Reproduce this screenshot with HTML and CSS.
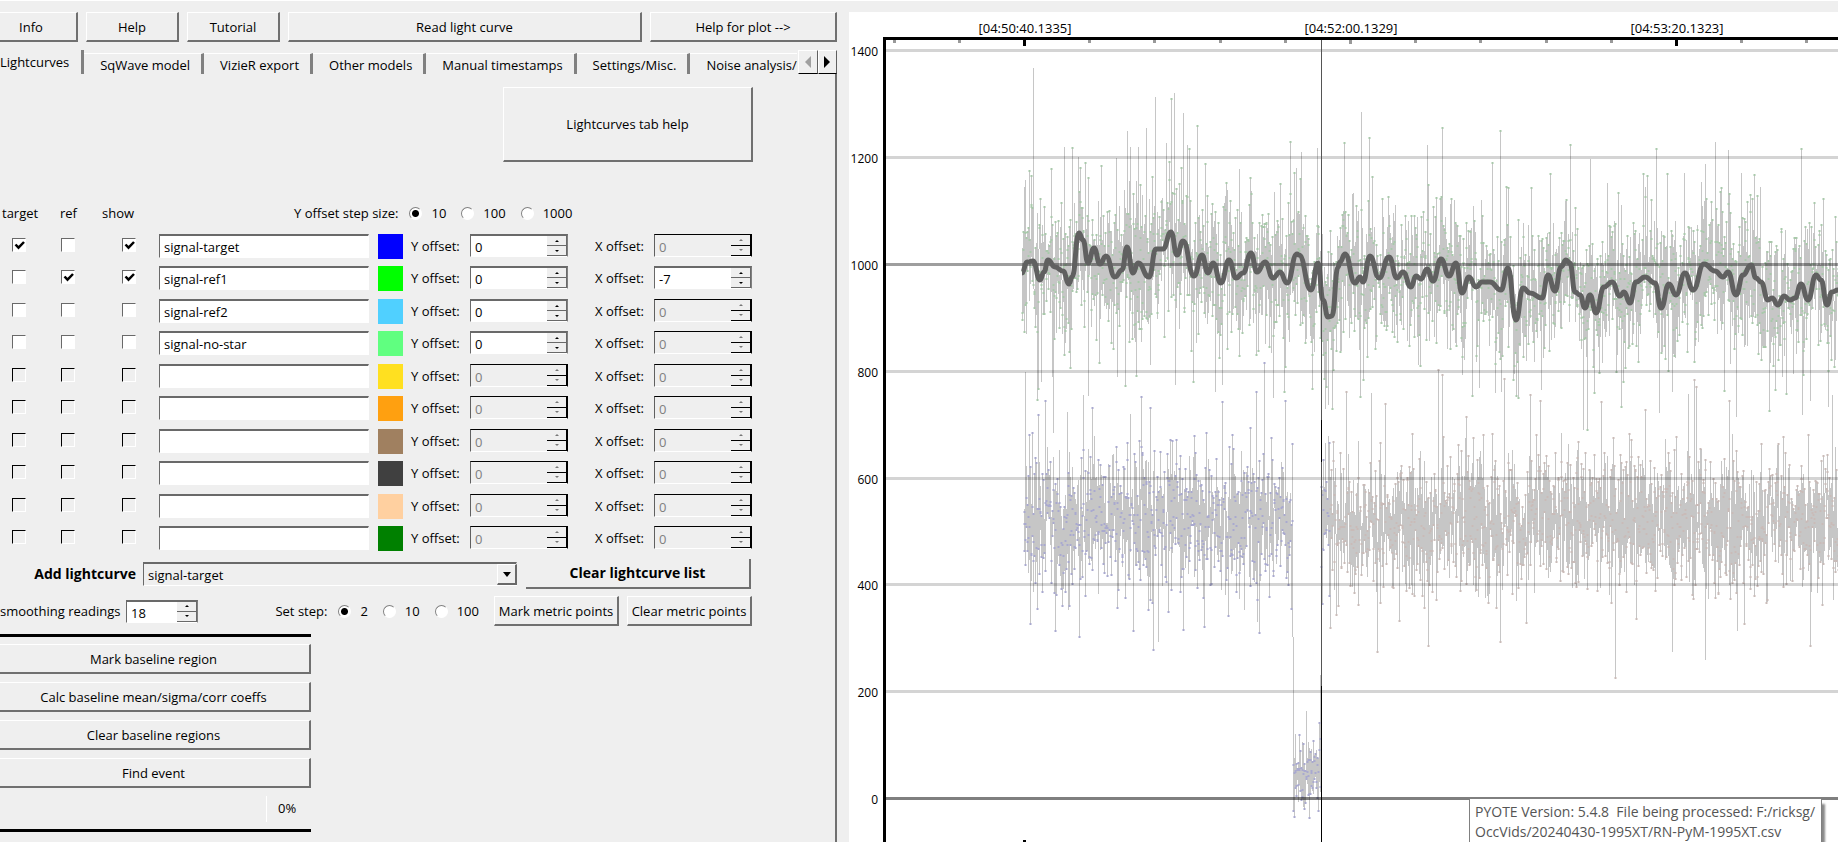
FILE: index.html
```html
<!DOCTYPE html>
<html lang="en">
<head>
  <meta charset="UTF-8" />
  <title>PYOTE</title>
  <meta name="viewport" content="width=device-width, initial-scale=1.0" />
  <link rel="stylesheet" href="styles.css">
</head>
<body>
  <main class="panel">
    <div class="toolbar">
      <button type="button">Info</button>
      <button type="button">Help</button>
      <button type="button">Tutorial</button>
      <button type="button">Read light curve</button>
      <button type="button">Help for plot --&gt;</button>
    </div>

    <div class="tabs">
      <div class="tab-strip" role="tablist">
        <button type="button" role="tab" aria-selected="true" class="tab active">Lightcurves</button>
        <button type="button" role="tab" class="tab">SqWave model</button>
        <button type="button" role="tab" class="tab">VizieR export</button>
        <button type="button" role="tab" class="tab">Other models</button>
        <button type="button" role="tab" class="tab">Manual timestamps</button>
        <button type="button" role="tab" class="tab">Settings/Misc.</button>
        <button type="button" role="tab" class="tab">Noise analysis/</button>
      </div>
      <div class="tab-scroll">
        <button type="button" aria-label="Scroll tabs left" disabled><svg width="6" height="12"><path d="M6 0v12L0 6z" fill="#a0a0a0" /></svg></button>
        <button type="button" aria-label="Scroll tabs right"><svg width="6" height="12"><path d="M0 0v12l6-6z" /></svg></button>
      </div>
    </div>

    <div class="pane">
      <button type="button" class="tab-help">Lightcurves tab help</button>

      <div class="list-header">
        <span>target</span>
        <span>ref</span>
        <span>show</span>
        <div class="radios">
          <span class="radios-title">Y offset step size:</span>
          <label><input type="radio" name="yStep" checked />10</label>
          <label><input type="radio" name="yStep" />100</label>
          <label><input type="radio" name="yStep" />1000</label>
        </div>
      </div>

      <div class="curve-list"></div>

      <div class="add-row">
        <label for="addCurve">Add lightcurve</label>
        <div class="combo">
          <select id="addCurve">
            <option>signal-target</option>
            <option>signal-ref1</option>
            <option>signal-ref2</option>
            <option>signal-no-star</option>
          </select>
          <span class="combo-arrow"><svg width="8" height="5"><path d="M0 0h8L4 5z" /></svg></span>
        </div>
        <button type="button">Clear lightcurve list</button>
      </div>

      <div class="metric-row">
        <label for="smoothing">smoothing readings</label>
        <div class="spin spin-small">
          <input type="number" id="smoothing" value="18" />
          <div class="spin-buttons">
            <button type="button" aria-label="Increase"></button>
            <button type="button" aria-label="Decrease"></button>
          </div>
        </div>
        <div class="radios">
          <span class="radios-title">Set step:</span>
          <label><input type="radio" name="setStep" checked />2</label>
          <label><input type="radio" name="setStep" />10</label>
          <label><input type="radio" name="setStep" />100</label>
        </div>
        <button type="button" class="metric-btn">Mark metric points</button>
        <button type="button" class="metric-btn">Clear metric points</button>
      </div>

      <div class="baseline-box">
        <button type="button">Mark baseline region</button>
        <button type="button">Calc baseline mean/sigma/corr coeffs</button>
        <button type="button">Clear baseline regions</button>
        <button type="button">Find event</button>
        <div class="progress" role="progressbar" aria-valuenow="0"><span>0%</span></div>
      </div>
    </div>
  </main>

  <section class="plot">
    <svg class="plot-svg" viewBox="849 12 989 830" preserveAspectRatio="xMinYMin slice">
      <path id="targetLine" class="curve" />
      <path id="refLine" class="curve" />
      <path id="targetDots" class="dots dots-blue" />
      <path id="fitDots" class="dots dots-tan" />
      <path id="refDots" class="dots dots-green" />
      <g id="grid"></g>
      <path id="smoothLine" class="smooth" />
      <path class="cursor" d="M1321 40h1v802h-1z" />
      <path class="marks" d="M1321 420h1v42h-1zM1321 686h1v156h-1zM1023 840h3v2h-3z" />
      <g id="ticks"></g>
      <path class="axis" d="M883 37h955v3H886v802h-3z" />
      <g id="labels"></g>
    </svg>
    <div class="file-note">PYOTE Version: 5.4.8  File being processed: F:/ricksg/
OccVids/20240430-1995XT/RN-PyM-1995XT.csv</div>
  </section>

  <script src="script.js"></script>
</body>
</html>
```
FILE: styles.css
```css
* {
  box-sizing: border-box;
}
body {
  margin: 0;
  height: 100vh;
  overflow: hidden;
  display: grid;
  grid-template-columns: 849fr 989fr;
  background: #efefef;
  border-top: 1px solid #fff;
  font-family: "Open Sans", "Noto Sans", sans-serif;
  font-size: 13px;
  line-height: 18px;
  color: #000;
}
button, input, select {
  font: inherit;
  color: inherit;
  margin: 0;
  padding: 0;
}
button {
  background: #efefef;
  border: 1px solid #fff;
  border-right: 2px solid #707070;
  border-bottom: 2px solid #707070;
  border-radius: 0;
  white-space: nowrap;
}

/* left side */
.panel {
  min-width: 0;
  overflow: hidden;
  padding: 11px 12px 0 0;
  display: flex;
  flex-direction: column;
}
.toolbar {
  display: grid;
  grid-template-columns: 93px 93px 93px 354fr 187fr;
  gap: 8px;
  margin-left: -15px;
}
.toolbar button {
  height: 30px;
}
.tabs {
  display: flex;
  height: 24px;
  margin-top: 8px;
}
.tab-strip {
  flex: 1;
  min-width: 0;
  overflow: hidden;
  display: flex;
  align-items: flex-end;
}
.tab {
  flex: none;
  height: 21px;
  padding: 2px 11px 0 16px;
  border: none;
  border-top: 1px solid #fff;
  border-right: 3px solid #808080;
}
.tab.active {
  height: 24px;
  padding: 0 12px 0 0;
  border-top: none;
}
.tab:last-child {
  padding-right: 0;
  border-right: none;
}
.tab-scroll {
  display: flex;
  width: 39px;
}
.tab-scroll button {
  flex: 1;
  display: flex;
  align-items: center;
  justify-content: center;
  border: 1px solid #fff;
  border-right: 1px solid #606060;
  border-bottom: 1px solid #000;
}
.pane {
  flex: 1;
  padding: 13px 82px 0 0;
  border-right: 2px solid #707070;
}
.tab-help {
  display: block;
  width: 250px;
  height: 75px;
  margin-left: auto;
}

/* lightcurve list */
.list-header {
  display: grid;
  grid-template-columns: 58px 42px 192px 1fr;
  align-items: center;
  height: 26px;
  margin-top: 38px;
  padding-left: 2px;
}
.radios {
  display: flex;
  align-items: center;
}
.radios-title {
  margin-right: 11px;
}
.radios label {
  display: flex;
  align-items: center;
  gap: 9px;
  margin-right: 15px;
}
input[type="radio"] {
  appearance: none;
  width: 13px;
  height: 13px;
  border: 1px solid;
  border-color: #808080 #fff #fff #808080;
  border-radius: 50%;
  background: #fff;
}
input[type="radio"]:checked {
  background: radial-gradient(circle, #000 3px, #fff 4px);
}
.curve-list {
  margin-top: 8px;
}
.curve-row {
  display: grid;
  grid-template-columns: 49px 61px 37px 1fr 33px 59px 125px 59px 99px;
  height: 32px;
  padding-left: 12px;
}
.curve-row:nth-child(even) {
  height: 33px;
}
.curve-row label {
  line-height: 24px;
}
input[type="checkbox"] {
  appearance: none;
  width: 14px;
  height: 14px;
  margin-top: 4px;
  border: 1px solid;
  border-color: #696969 #fff #fff #696969;
  background: #fff;
}
input[type="checkbox"]:disabled {
  background: #efefef;
  border-color: #000 #fff #fff #000;
}
input[type="checkbox"]:checked {
  background: #fff url("data:image/svg+xml,%3Csvg xmlns='http://www.w3.org/2000/svg' width='12' height='12'%3E%3Cpath d='M2.5 5.5l3 3.2L11 3' fill='none' stroke='%23000' stroke-width='2.5'/%3E%3C/svg%3E");
}
.curve-name {
  height: 24px;
  min-width: 0;
  margin-right: 9px;
  padding: 1px 4px 0;
  border: 1px solid;
  border-width: 2px 1px 1px 1px;
  border-color: #696969 #fff #fff #696969;
  background: #fff;
}
.swatch {
  width: 25px;
  height: 25px;
}
.spin {
  display: flex;
  width: 98px;
  height: 23px;
  border: 1px solid;
  border-color: #696969 #808080 #fff #696969;
  border-top-width: 2px;
  background: #fff;
}
.spin-small {
  width: 72px;
}
.spin input {
  flex: 1;
  min-width: 0;
  padding: 2px 0 0 4px;
  border: none;
  background: none;
  appearance: textfield;
}
.spin input::-webkit-inner-spin-button {
  appearance: none;
}
.spin-buttons {
  display: flex;
  flex-direction: column;
  width: 20px;
}
.spin-buttons button {
  flex: 1;
  min-height: 0;
  display: flex;
  align-items: center;
  justify-content: center;
  border: none;
  border-right: 1px solid #696969;
  border-bottom: 1px solid #696969;
}
.spin-buttons button::before {
  content: "";
  border: 2px solid transparent;
  border-top-width: 0;
  border-bottom-color: #000;
}
.spin-buttons button:last-child::before {
  border-top: 2px solid #000;
  border-bottom: none;
}
.spin.disabled {
  background: #efefef;
  border-width: 1px;
  border-color: #000 #000 #fff #606060;
  color: #808080;
}
.spin.disabled input {
  padding-top: 3px;
}
.spin.disabled button {
  border-color: #000;
}
.spin.disabled button::before {
  opacity: 0.5;
}

/* lower controls */
.add-row {
  display: grid;
  grid-template-columns: 101px 1fr 225px;
  align-items: center;
  height: 30px;
  padding: 0 2px 0 35px;
  font-size: 14px;
  font-weight: bold;
}
.add-row button {
  height: 30px;
  border-left: none;
  border-top: none;
}
.add-row label {
  display: flex;
  justify-content: flex-end;
  white-space: nowrap;
}
.combo {
  position: relative;
  margin: 0 9px 0 7px;
  font-size: 13px;
  font-weight: normal;
}
.combo select {
  display: block;
  width: 100%;
  height: 24px;
  padding-left: 4px;
  appearance: none;
  border: 1px solid;
  border-top-width: 2px;
  border-color: #696969 #fff #fff #696969;
  border-radius: 0;
  background: #efefef;
}
.combo-arrow {
  position: absolute;
  top: 2px;
  right: 0;
  bottom: 1px;
  width: 20px;
  display: flex;
  align-items: center;
  justify-content: center;
  border: 1px solid #fff;
  border-right: 2px solid #696969;
  border-bottom: 2px solid #696969;
  pointer-events: none;
}
.metric-row {
  display: flex;
  align-items: center;
  height: 30px;
  margin-top: 7px;
  padding-right: 1px;
}
.metric-row > label {
  width: 126px;
  white-space: nowrap;
}
.metric-row .radios {
  margin-left: auto;
}
.metric-btn {
  width: 125px;
  height: 30px;
}
.metric-btn + .metric-btn {
  margin-left: 8px;
}
.baseline-box {
  display: flex;
  flex-direction: column;
  gap: 8px;
  width: 314px;
  margin: 8px 0 0 -3px;
  padding-top: 7px;
  border: solid #000;
  border-width: 3px 0;
}
.baseline-box button {
  height: 30px;
}
.progress {
  display: flex;
  justify-content: flex-end;
  height: 33px;
  padding-bottom: 7px;
}
.progress span {
  width: 45px;
  padding: 3px 0 0 11px;
  border-left: 1px solid #fff;
}

/* plot */
.plot {
  position: relative;
  min-width: 0;
  margin-top: 11px;
  background: #fff;
  overflow: hidden;
}
.plot-svg {
  display: block;
  width: 100%;
  height: 100%;
}
.plot-svg text {
  font-size: 12px;
}
.plot-svg .time {
  font-size: 13px;
}
.curve {
  fill: none;
  stroke: #c6c6c6;
  stroke-width: 1;
  shape-rendering: crispEdges;
}
.dots-blue {
  fill: #a9a9cf;
}
.dots-tan {
  fill: #c9bbb8;
}
.dots-green {
  fill: #a9c9ab;
}
.smooth {
  fill: none;
  stroke: #606060;
  stroke-width: 5;
  stroke-linejoin: round;
}
.cursor {
  fill: #555;
}
.file-note {
  position: absolute;
  right: 16px;
  bottom: -7px;
  width: 353px;
  padding: 3px 5px 6px;
  border: 1px solid #808080;
  background: #fff;
  box-shadow: 3px 6px 2px #888;
  color: #555;
  font-size: 14px;
  line-height: 20px;
  white-space: pre;
}
```
FILE: script.js
```js
// name, colour, target, ref, show, x offset (null = disabled)
const curves = [
  ['signal-target', '#0000ff', 1, 0, 1, null],
  ['signal-ref1', '#00ff00', 0, 1, 1, -7],
  ['signal-ref2', '#50d0ff', 0, 0, 0, null],
  ['signal-no-star', '#60ff80', 0, 0, 0, null],
  ['', '#ffe020', 0, 0, 0, null],
  ['', '#ffa010', 0, 0, 0, null],
  ['', '#a08060', 0, 0, 0, null],
  ['', '#404040', 0, 0, 0, null],
  ['', '#ffd0a0', 0, 0, 0, null],
  ['', '#008000', 0, 0, 0, null]
];

function spin(id, value, enabled) {
  const off = enabled ? '' : 'disabled';
  return `<div class="spin ${off}">
    <input type="number" id="${id}" value="${value}" ${off} />
    <div class="spin-buttons">
      <button type="button" aria-label="Increase" ${off}></button>
      <button type="button" aria-label="Decrease" ${off}></button>
    </div>
  </div>`;
}

document.querySelector('.curve-list').innerHTML = curves.map(([name, color, target, ref, show, x], i) => {
  const check = (label, on) =>
    `<input type="checkbox" aria-label="${label} ${i + 1}" ${on ? 'checked' : ''} ${name ? '' : 'disabled'} />`;
  return `<div class="curve-row">
    ${check('target', target)}${check('ref', ref)}${check('show', show)}
    <input type="text" class="curve-name" aria-label="Lightcurve ${i + 1}" value="${name}" />
    <div class="swatch" style="background:${color}"></div>
    <label for="y${i}">Y offset:</label>${spin('y' + i, 0, name !== '')}
    <label for="x${i}">X offset:</label>${spin('x' + i, x === null ? 0 : x, x !== null)}
  </div>`;
}).join('');

// grid, ticks and axis labels
const yPos = v => Math.round(799 - v * 0.534);
let grid = '';
let labels = '';
for (let v = 0; v <= 1400; v += 200) {
  const y = yPos(v);
  const alpha = v === 0 ? 0.5 : v === 1000 ? 0.38 : 0.17;
  grid += `<rect x="886" y="${y - 2}" width="952" height="3" fill="#000" fill-opacity="${alpha}" />`;
  labels += `<text x="878" y="${y + 5}" text-anchor="end">${v}</text>`;
}
['[04:50:40.1335]', '[04:52:00.1329]', '[04:53:20.1323]'].forEach((t, i) => {
  labels += `<text class="time" x="${1025 + i * 326}" y="33" text-anchor="middle">${t}</text>`;
});
let ticks = '';
for (let i = -2; i < 13; i++) {
  const x = Math.round(1023 + i * 65.2);
  const big = i === 0 || i === 10;
  ticks += `<rect x="${x}" y="40" width="3" height="${big ? 6 : i === 5 ? 4 : 3}" fill="${big ? '#000' : '#999'}" />`;
}
document.getElementById('grid').innerHTML = grid;
document.getElementById('ticks').innerHTML = ticks;
document.getElementById('labels').innerHTML = labels;

// smoothed reference curve
const smooth = [
  [1022,273],[1027,262],[1033,261],[1040,280],[1044,272],[1048,260],[1055,267],[1063,271],[1069,284],[1072,277],
  [1079,233],[1083,240],[1088,263],[1094,248],[1100,264],[1106,256],[1115,277],[1122,270],[1127,247],[1133,273],
  [1138,263],[1149,277],[1156,249],[1163,249],[1171,232],[1177,255],[1183,241],[1194,276],[1202,255],[1208,273],
  [1213,263],[1221,283],[1229,260],[1236,278],[1243,273],[1251,253],[1257,272],[1265,262],[1273,278],[1280,272],
  [1287,283],[1297,254],[1299,255],[1311,290],[1318,263],[1323,300],[1328,317],[1332,316],[1338,267],[1340,262],
  [1345,254],[1355,283],[1360,277],[1363,282],[1370,256],[1379,278],[1389,257],[1397,278],[1403,272],[1411,287],
  [1416,276],[1421,279],[1427,269],[1433,281],[1441,259],[1449,276],[1456,263],[1462,293],[1469,277],[1476,287],
  [1482,282],[1490,282],[1501,290],[1508,268],[1516,320],[1523,288],[1530,293],[1542,298],[1548,275],[1555,291],
  [1561,267],[1566,260],[1570,263],[1575,292],[1580,295],[1585,308],[1590,295],[1596,313],[1604,287],[1612,282],
  [1620,296],[1624,292],[1630,303],[1636,282],[1645,277],[1655,283],[1661,308],[1669,284],[1676,295],[1685,273],
  [1693,290],[1704,264],[1715,271],[1723,277],[1728,272],[1736,295],[1743,275],[1751,265],[1756,278],[1761,282],
  [1768,300],[1772,298],[1778,305],[1784,296],[1790,300],[1795,298],[1801,284],[1808,300],[1816,275],[1821,280],
  [1827,305],[1832,292],[1838,290]
];
let d = 'M' + smooth[0];
for (let i = 1; i < smooth.length; i++) {
  const [x0, y0] = smooth[i - 1];
  const [x1, y1] = smooth[i];
  const mid = (x0 + x1) / 2;
  d += `C${mid},${y0} ${mid},${y1} ${x1},${y1}`;
}
document.getElementById('smoothLine').setAttribute('d', d);

function smoothAt(x) {
  let i = 1;
  while (i < smooth.length - 1 && smooth[i][0] < x) i++;
  const [x0, y0] = smooth[i - 1];
  const [x1, y1] = smooth[i];
  return y0 + (y1 - y0) * (x - x0) / (x1 - x0);
}

// largest excursions of each curve
const refPeaks = {
  1025:180,1033:68,1037:400,1038:389,1041:382,1051:169,1052:377,1053:433,1064:147,1069:352,1072:148,1078:157,
  1085:163,1088:396,1099:363,1101:166,1116:158,1117:377,1125:386,1127:131,1130:147,1136:376,1138:147,1146:128,
  1150:365,1155:97,1166:143,1171:99,1174:93,1175:385,1183:113,1187:145,1189:149,1193:382,1197:126,1205:164,
  1215:392,1222:385,1239:169,1250:178,1273:398,1280:184,1284:392,1290:142,1301:152,1312:389,1317:148,1325:409,
  1328:405,1332:409,1344:143,1360:397,1361:112,1363:380,1369:138,1427:145,1442:128,1472:396,1479:388,1492:163,
  1495:393,1500:131,1501:392,1516:396,1518:398,1531:188,1541:390,1550:174,1570:145,1583:430,1587:430,1590:159,
  1594:393,1607:183,1618:193,1621:407,1643:174,1647:176,1656:149,1659:413,1667:174,1672:392,1684:173,1705:164,
  1715:142,1724:391,1728:150,1736:417,1741:173,1754:175,1760:187,1769:411,1786:394,1801:149,1802:415,1810:401,
  1823:199,1828:407
};
const targetPeaks = {
  1025:372,1030:624,1037:609,1038:415,1045:401,1055:631,1067:412,1079:637,1083:395,1092:408,1130:414,1133:631,
  1141:397,1150:408,1153:650,1158:642,1168:612,1172:441,1183:630,1194:436,1204:627,1206:433,1222:402,1228:616,
  1250:428,1256:392,1257:622,1259:633,1264:363,1285:401,1292:444,1294:817,1306:711,1309:818,1319:723,1330:628,
  1336:615,1346:392,1371:393,1377:652,1385:404,1399:621,1428:646,1438:370,1442:375,1466:417,1500:642,1504:379,
  1526:623,1530:395,1540:401,1601:402,1615:678,1636:619,1645:410,1672:652,1688:394,1694:380,1696:387,1705:660,
  1729:401,1737:631,1744:624,1810:646,1832:395
};

let seed = 19952024;
function random() {
  seed = (seed * 1664525 + 1013904223) % 4294967296;
  return seed / 4294967296;
}
function noise(limit) {
  let n;
  do {
    n = Math.sqrt(-2 * Math.log(random() + 1e-9)) * Math.cos(2 * Math.PI * random());
  } while (Math.abs(n) > limit);
  return n;
}

// all samples that share a pixel column are drawn at the same x
function makeCurve(start, level, sigma, peaks) {
  const points = [];
  for (let x = start; x < 1839; x++) {
    const count = random() < 0.5 ? 3 : 4;
    for (let k = 0; k < count; k++) {
      const y = k === 1 && peaks[x] ? peaks[x] : level(x) + noise(2.4) * sigma(x);
      points.push([x + 0.5, Math.round(y)]);
    }
  }
  return points;
}
const linePath = pts => 'M' + pts.join('L');
const dotPath = pts => pts.filter((p, i) => i % 3 !== 2)
  .map(([x, y]) => `M${x - 1} ${y - 1}h2v2h-2z`).join('');

const inEvent = x => x > 1292 && x < 1321;
const refPts = makeCurve(1022, smoothAt, () => 38, refPeaks);
const targetPts = makeCurve(1024, x => inEvent(x) ? 772 : 522, x => inEvent(x) ? 19 : 37, targetPeaks);

document.getElementById('refLine').setAttribute('d', linePath(refPts));
document.getElementById('targetLine').setAttribute('d', linePath(targetPts));
document.getElementById('refDots').setAttribute('d', dotPath(refPts));
document.getElementById('targetDots').setAttribute('d', dotPath(targetPts.filter(p => p[0] < 1330)));
document.getElementById('fitDots').setAttribute('d', dotPath(targetPts.filter(p => p[0] >= 1330)));
```
